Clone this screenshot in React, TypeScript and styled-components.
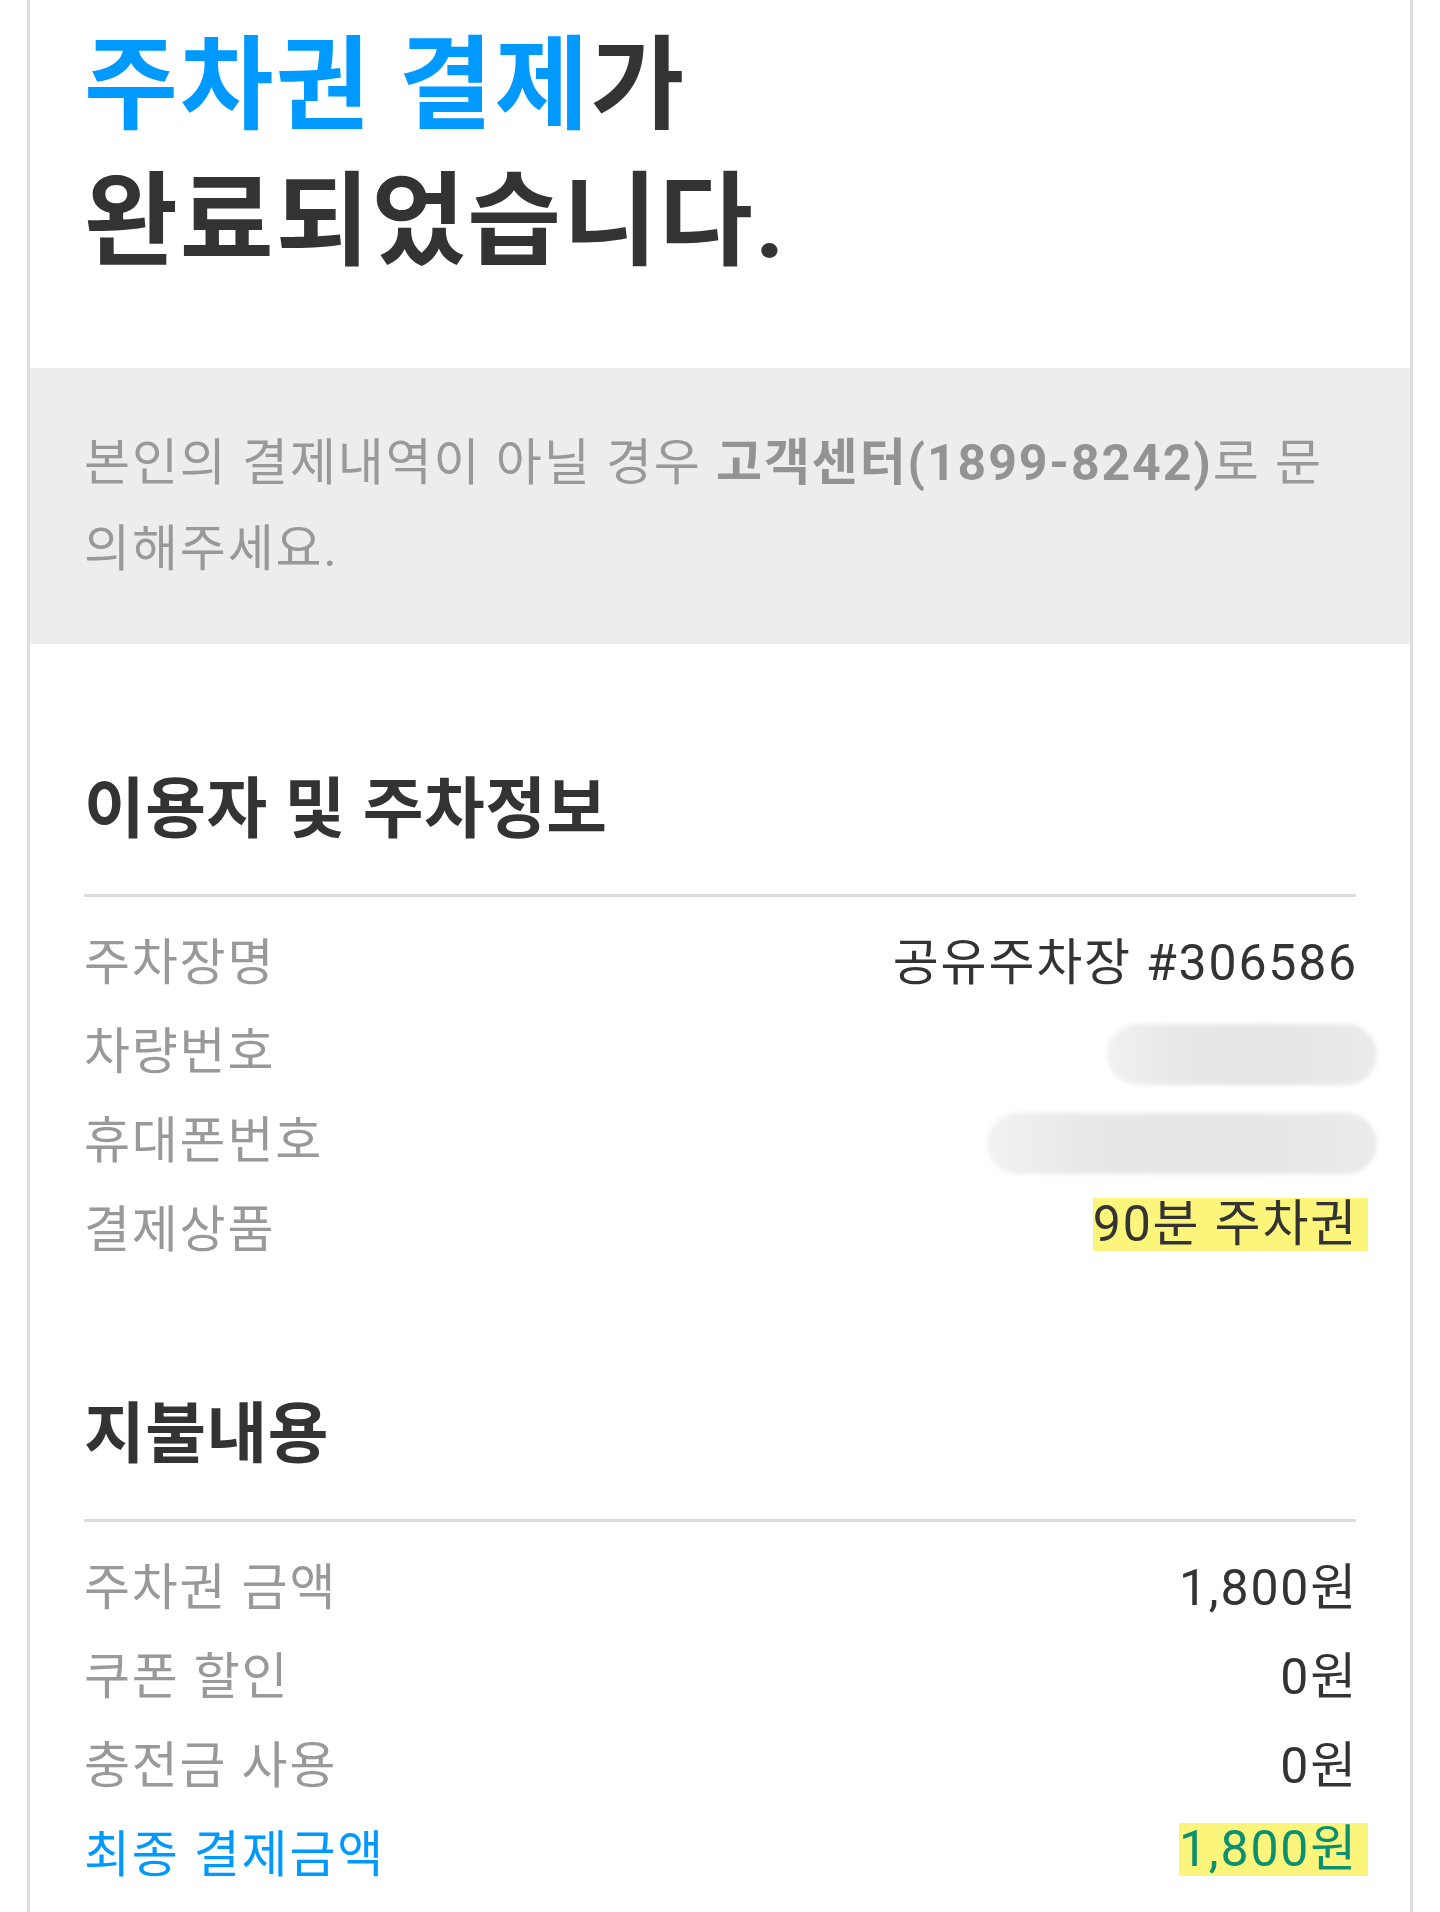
import React from "react";
import styled, { createGlobalStyle } from "styled-components";

const GlobalStyle = createGlobalStyle`
  html, body {
    margin: 0;
    padding: 0;
    background: #ffffff;
  }
  body {
    font-family: Roboto, "Noto Sans CJK KR", "Noto Sans", sans-serif;
    color: #333333;
  }
  * { box-sizing: border-box; }
`;

const Page = styled.div`
  width: 1386px;
  min-height: 1912px;
  margin: 0 auto;
  border-left: 3px solid #dddddd;
  border-right: 3px solid #dddddd;
  background: #ffffff;
`;

const Title = styled.h1`
  margin: 0;
  padding: 18px 54px 0;
  font-size: 102px;
  line-height: 136px;
  font-weight: 700;
  letter-spacing: 2px;
  color: #333333;
`;

const Accent = styled.span`
  color: #0099ff;
`;

const Notice = styled.div`
  margin-top: 78px;
  padding: 52px 54px;
  background: #ededed;
  font-size: 50px;
  line-height: 86px;
  letter-spacing: 1.9px;
  color: #999999;
  word-break: break-all;
`;

const NoticeStrong = styled.strong`
  font-weight: 700;
  color: #939393;
`;

const Section = styled.section`
  padding: 126px 54px 0;
`;

const SectionTitle = styled.h2`
  margin: 0;
  font-size: 66px;
  line-height: 80px;
  font-weight: 700;
  letter-spacing: 0.5px;
  color: #333333;
`;

const Divider = styled.hr`
  margin: 44px 0 0;
  border: 0;
  height: 3px;
  background: #dddddd;
`;

const List = styled.div`
  margin-top: 16px;
  display: flex;
  flex-direction: column;
`;

const Row = styled.div`
  height: 89px;
  display: flex;
  align-items: center;
  justify-content: space-between;
  font-size: 50px;
  letter-spacing: 1.8px;
`;

const Label = styled.span<{ $accent?: boolean }>`
  color: ${(p) => (p.$accent ? "#0099ff" : "#999999")};
  white-space: nowrap;
`;

const Value = styled.span`
  color: #333333;
  margin-right: -2px;
  white-space: nowrap;
`;

const Highlight = styled.span<{ $color?: string }>`
  display: inline-block;
  line-height: 53px;
  padding-right: 10px;
  margin-right: -12px;
  background: #fbf57c;
  color: ${(p) => p.$color ?? "#333333"};
  white-space: nowrap;
`;

const Masked = styled.div<{ $w: number }>`
  width: ${(p) => p.$w}px;
  height: 61px;
  margin-top: 16px;
  margin-right: -21px;
  border-radius: 31px;
  background: linear-gradient(
    to right,
    #f2f2f2 0%,
    #e8e8e8 25%,
    #e5e5e5 60%,
    #ebebeb 100%
  );
  filter: blur(2px);
`;

export default function App() {
  return (
    <>
      <GlobalStyle />
      <Page>
        <Title>
          <Accent>주차권 결제</Accent>가
          <br />
          완료되었습니다.
        </Title>

        <Notice>
          본인의 결제내역이 아닐 경우 <NoticeStrong>고객센터(1899-8242)</NoticeStrong>로 문
          <br />
          의해주세요.
        </Notice>

        <Section>
          <SectionTitle>이용자 및 주차정보</SectionTitle>
          <Divider />
          <List>
            <Row>
              <Label>주차장명</Label>
              <Value>공유주차장 #306586</Value>
            </Row>
            <Row>
              <Label>차량번호</Label>
              <Masked $w={270} />
            </Row>
            <Row>
              <Label>휴대폰번호</Label>
              <Masked $w={390} />
            </Row>
            <Row>
              <Label>결제상품</Label>
              <Highlight>90분 주차권</Highlight>
            </Row>
          </List>
        </Section>

        <Section>
          <SectionTitle>지불내용</SectionTitle>
          <Divider />
          <List>
            <Row>
              <Label>주차권 금액</Label>
              <Value>1,800원</Value>
            </Row>
            <Row>
              <Label>쿠폰 할인</Label>
              <Value>0원</Value>
            </Row>
            <Row>
              <Label>충전금 사용</Label>
              <Value>0원</Value>
            </Row>
            <Row>
              <Label $accent>최종 결제금액</Label>
              <Highlight $color="#0a8f70">1,800원</Highlight>
            </Row>
          </List>
        </Section>
      </Page>
    </>
  );
}
